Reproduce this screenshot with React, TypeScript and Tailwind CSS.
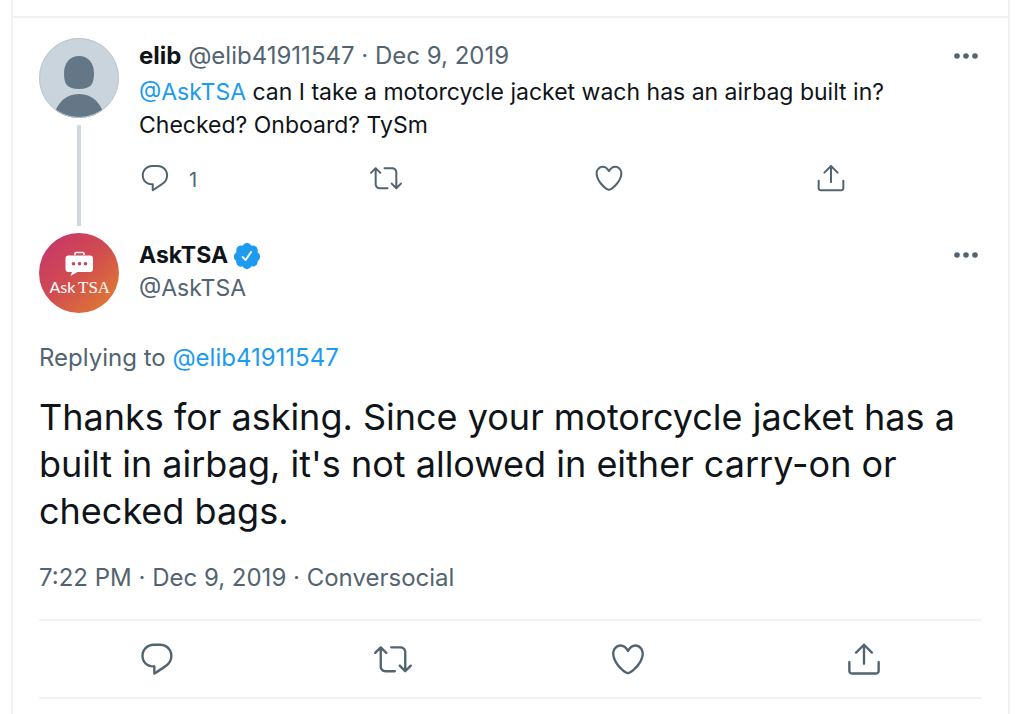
import type { ReactNode } from "react";

const ICONS = {
  reply: [
    "M14.046 2.242l-4.148-.01h-.002c-4.374 0-7.8 3.427-7.8 7.802 0 4.098 3.186 7.206 7.465 7.37v3.828c0 .108.044.286.12.403.142.225.384.347.632.347.138 0 .277-.038.402-.118.264-.168 6.473-4.14 8.088-5.506 1.902-1.61 3.04-3.97 3.043-6.312v-.017c-.006-4.367-3.43-7.787-7.8-7.788zm3.787 12.972c-1.134.96-4.862 3.405-6.772 4.643V16.67c0-.414-.335-.75-.75-.75h-.396c-3.66 0-6.318-2.476-6.318-5.886 0-3.534 2.768-6.302 6.3-6.302l4.147.01h.002c3.532 0 6.3 2.766 6.302 6.296-.003 1.91-.942 3.844-2.514 5.176z",
  ],
  retweet: [
    "M23.77 15.67c-.292-.293-.767-.293-1.06 0l-2.22 2.22V7.65c0-2.068-1.683-3.75-3.75-3.75h-5.85c-.414 0-.75.336-.75.75s.336.75.75.75h5.85c1.24 0 2.25 1.01 2.25 2.25v10.24l-2.22-2.22c-.293-.293-.768-.293-1.06 0s-.294.768 0 1.06l3.5 3.5c.145.147.337.22.53.22s.383-.072.53-.22l3.5-3.5c.294-.292.294-.767 0-1.06zm-10.66 3.28H7.26c-1.24 0-2.25-1.01-2.25-2.25V6.46l2.22 2.22c.148.147.34.22.532.22s.384-.073.53-.22c.293-.293.293-.768 0-1.06l-3.5-3.5c-.293-.294-.768-.294-1.06 0l-3.5 3.5c-.294.292-.294.767 0 1.06s.767.293 1.06 0l2.22-2.22V16.7c0 2.068 1.683 3.75 3.75 3.75h5.85c.414 0 .75-.336.75-.75s-.337-.75-.75-.75z",
  ],
  like: [
    "M12 21.638h-.014C9.403 21.59 1.95 14.856 1.95 8.478c0-3.064 2.525-5.754 5.403-5.754 2.29 0 3.83 1.58 4.646 2.73.814-1.148 2.354-2.73 4.645-2.73 2.88 0 5.404 2.69 5.404 5.755 0 6.376-7.454 13.11-10.037 13.157H12zM7.354 4.225c-2.08 0-3.903 1.988-3.903 4.255 0 5.74 7.034 11.596 8.55 11.658 1.518-.062 8.55-5.917 8.55-11.658 0-2.267-1.823-4.255-3.903-4.255-2.528 0-3.94 2.936-3.952 2.965-.23.562-1.156.562-1.387 0-.014-.03-1.425-2.965-3.954-2.965z",
  ],
  share: [
    "M17.53 7.47l-5-5c-.293-.293-.768-.293-1.06 0l-5 5c-.294.293-.294.768 0 1.06s.767.294 1.06 0l3.72-3.72V15c0 .414.336.75.75.75s.75-.336.75-.75V4.81l3.72 3.72c.146.147.338.22.53.22s.384-.072.53-.22c.293-.293.293-.767 0-1.06z",
    "M19.708 21.944H4.292C3.028 21.944 2 20.916 2 19.652V14c0-.414.336-.75.75-.75s.75.336.75.75v5.652c0 .437.355.792.792.792h15.416c.437 0 .792-.355.792-.792V14c0-.414.336-.75.75-.75s.75.336.75.75v5.652c0 1.264-1.028 2.292-2.292 2.292z",
  ],
  verified: [
    "M22.5 12.5c0-1.58-.875-2.95-2.148-3.6.154-.435.238-.905.238-1.4 0-2.21-1.71-3.998-3.818-3.998-.47 0-.92.084-1.336.25C14.818 2.415 13.51 1.5 12 1.5s-2.816.917-3.437 2.25c-.415-.165-.866-.25-1.336-.25-2.11 0-3.818 1.79-3.818 4 0 .494.083.964.237 1.4-1.272.65-2.147 2.018-2.147 3.6 0 1.495.782 2.798 1.942 3.486-.02.17-.032.34-.032.514 0 2.21 1.708 4 3.818 4 .47 0 .92-.086 1.335-.25.62 1.334 1.926 2.25 3.437 2.25 1.512 0 2.818-.916 3.437-2.25.415.163.865.248 1.336.248 2.11 0 3.818-1.79 3.818-4 0-.174-.012-.344-.033-.513 1.158-.687 1.943-1.99 1.943-3.484zm-6.616-3.334l-4.334 6.5c-.145.217-.382.334-.625.334-.143 0-.288-.04-.416-.126l-.115-.094-2.415-2.415c-.293-.293-.293-.768 0-1.06s.768-.294 1.06 0l1.77 1.767 3.825-5.74c.23-.345.696-.436 1.04-.207.346.23.44.696.21 1.04z",
  ],
};

type IconName = keyof typeof ICONS;

const ACTIONS: { icon: IconName; label: string }[] = [
  { icon: "reply", label: "Reply" },
  { icon: "retweet", label: "Retweet" },
  { icon: "like", label: "Like" },
  { icon: "share", label: "Share" },
];

function Icon({ name, className }: { name: IconName; className: string }) {
  return (
    <svg viewBox="0 0 24 24" fill="currentColor" className={className} aria-hidden="true">
      {ICONS[name].map((d) => (
        <path key={d} d={d} />
      ))}
    </svg>
  );
}

function MoreButton() {
  return (
    <button type="button" aria-label="More" className="flex h-8 w-8 items-center justify-center">
      <svg viewBox="0 0 32 32" fill="currentColor" className="h-8 w-8" aria-hidden="true">
        <circle cx="7" cy="16" r="2.8" />
        <circle cx="16" cy="16" r="2.8" />
        <circle cx="25" cy="16" r="2.8" />
      </svg>
    </button>
  );
}

function Mention({ children }: { children: ReactNode }) {
  return (
    <a href="#" className="text-[#1d9bf0]">
      {children}
    </a>
  );
}

function DefaultAvatar() {
  return (
    <svg viewBox="0 0 80 80" className="h-20 w-20" role="img" aria-label="elib">
      <clipPath id="avatar-clip">
        <circle cx="40" cy="40" r="40" />
      </clipPath>
      <g clipPath="url(#avatar-clip)">
        <rect width="80" height="80" fill="#c9d4dc" />
        <path
          d="M40 18C31 18 25 25 25 35C25 46 28 51 40 51C52 51 55 46 55 35C55 25 49 18 40 18Z"
          fill="#647786"
        />
        <path d="M14 80C18 64 27 56 40 56C53 56 62 64 66 80Z" fill="#647786" />
      </g>
      <circle cx="40" cy="40" r="39.5" fill="none" stroke="#bcc8d0" />
    </svg>
  );
}

function TsaAvatar() {
  return (
    <svg viewBox="0 0 80 80" className="h-20 w-20" role="img" aria-label="AskTSA">
      <defs>
        <linearGradient id="tsa-fill" x1="0.1" y1="0.1" x2="0.85" y2="0.9">
          <stop offset="0" stopColor="#c73868" />
          <stop offset="0.5" stopColor="#d14c50" />
          <stop offset="1" stopColor="#dd7634" />
        </linearGradient>
      </defs>
      <circle cx="40" cy="40" r="40" fill="url(#tsa-fill)" />
      <path d="M36 22V20.5Q36 19.5 37 19.5H44Q45 19.5 45 20.5V22" fill="none" stroke="#fff" strokeWidth="1.5" />
      <path
        d="M29.5 22.5H51Q54 22.5 54 25.5V36Q54 39 51 39H38.5L31.5 43L33 39H29.5Q26.5 39 26.5 36V25.5Q26.5 22.5 29.5 22.5Z"
        fill="#fff"
      />
      <g fill="#b94a60">
        <circle cx="34.5" cy="30.8" r="1.8" />
        <circle cx="40.5" cy="30.8" r="1.8" />
        <circle cx="46.5" cy="30.8" r="1.8" />
      </g>
      <text x="10.5" y="60" fill="#fff" fontFamily="Lato, sans-serif" fontWeight="400" fontSize="16">
        Ask
      </text>
      <text x="39" y="60" fill="#fff" fontFamily="Liberation Serif, serif" fontSize="17">
        TSA
      </text>
    </svg>
  );
}

export default function App() {
  return (
    <main className="mr-[14px] ml-[11px] min-h-screen border-x-2 border-[#eff3f4] bg-white font-['Inter','Liberation_Sans',sans-serif] text-2xl leading-[33px] text-[#536471]">
      <div className="h-[18px] border-b-2 border-[#eff3f4]" />

      <article className="flex gap-5 px-[26px] pt-5">
        <div className="flex flex-col items-center">
          <DefaultAvatar />
          <div className="mt-[7px] mb-[7px] w-1 grow bg-[#cfd9de]" />
        </div>
        <div className="min-w-0 grow pt-px">
          <div className="flex items-center justify-between">
            <div>
              <a href="#" className="font-bold text-[#0f1419]">
                elib
              </a>{" "}
              @elib41911547 · Dec 9, 2019
            </div>
            <MoreButton />
          </div>
          <p className="mt-1 text-[23px] leading-[33px] text-[#0f1419]">
            <Mention>@AskTSA</Mention> can I take a motorcycle jacket wach has an airbag built in?
            <br />
            Checked? Onboard? TySm
          </p>
          <div className="mt-5 mb-[39px] grid max-w-[708px] grid-cols-[231fr_223fr_222fr_32fr]">
            {ACTIONS.map(({ icon, label }) => (
              <button key={icon} type="button" aria-label={label} className="flex items-center gap-[18px]">
                <Icon name={icon} className="h-8 w-8 shrink-0" />
                {icon === "reply" && <span className="pt-1 text-xl leading-7">1</span>}
              </button>
            ))}
          </div>
        </div>
      </article>

      <article className="px-[26px]">
        <header className="flex gap-5">
          <TsaAvatar />
          <div className="flex grow items-start justify-between pt-[6px]">
            <div className="text-[23px] leading-[33px]">
              <a href="#" className="flex items-center gap-1 font-bold text-[#0f1419]">
                AskTSA
                <Icon name="verified" className="h-[30px] w-[30px] text-[#1d9bf0]" />
              </a>
              <a href="#" className="block">
                @AskTSA
              </a>
            </div>
            <MoreButton />
          </div>
        </header>

        <p className="mt-7">
          Replying to <Mention>@elib41911547</Mention>
        </p>
        <p className="mt-5 text-4xl leading-[47px] text-[#0f1419]">
          Thanks for asking. Since your motorcycle jacket has a
          <br />
          built in airbag, it's not allowed in either carry-on or
          <br />
          checked bags.
        </p>
        <p className="mt-[26px]">
          <a href="#">7:22 PM · Dec 9, 2019</a> · <a href="#">Conversocial</a>
        </p>

        <div className="mt-[25px] flex h-20 items-center justify-around border-y-2 border-[#eff3f4]">
          {ACTIONS.map(({ icon, label }) => (
            <button key={icon} type="button" aria-label={label}>
              <Icon name={icon} className="h-[38px] w-[38px]" />
            </button>
          ))}
        </div>
      </article>
    </main>
  );
}
